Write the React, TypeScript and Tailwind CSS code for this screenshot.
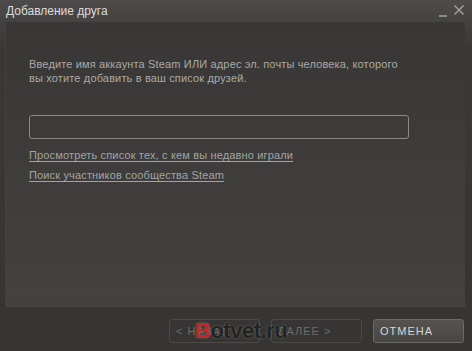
const font = { fontFamily: '"Liberation Sans", "DejaVu Sans", sans-serif' };

function NavButton({ label, primary }: { label: string; primary?: boolean }) {
  return (
    <button
      className={
        primary
          ? "h-[24px] w-[91px] rounded-[3px] border border-[#6b6a67] bg-gradient-to-b from-[#55534f] to-[#484744] pl-[6px] text-left text-[11px] tracking-[1px] text-[#d6d6d6]"
          : "h-[24px] w-[91px] rounded-[3px] border border-[#4b4a47] bg-transparent pl-[6px] text-left text-[11px] tracking-[1px] text-[#6e6d6a]"
      }
    >
      {label}
    </button>
  );
}

export default function App() {
  return (
    <div
      className="relative flex h-[351px] w-[472px] flex-col overflow-hidden bg-gradient-to-b from-[#4d4c4a] via-[#393836] via-[14%] to-[#363533]"
      style={font}
    >
      {/* title bar */}
      <div className="flex h-[22px] items-center justify-between pl-[6px] pr-[8px]">
        <span className="text-[12px] text-[#dcdcdc]">Добавление друга</span>
        <div className="flex items-center gap-[7px]">
          <span className="mt-[9px] h-[2px] w-[8px] bg-[#8a8a8a]" />
          <svg width="10" height="10" viewBox="0 0 10 10" className="mb-[2px]">
            <path d="M0.5 0.5 L9.5 9.5 M9.5 0.5 L0.5 9.5" stroke="#a2a2a2" strokeWidth="1.4" />
          </svg>
        </div>
      </div>

      {/* body panel */}
      <div className="flex flex-1">
        <div className="ml-[5px] mr-[7px] h-[285px] flex-1 bg-gradient-to-b from-[#383735] to-[#434240] px-[24px] pt-[35px] shadow-[inset_1px_0_0_#42413f]">
          <p className="text-[11px] leading-[14px] tracking-[0.15px] text-[#a9a9a9]">
            Введите имя аккаунта Steam ИЛИ адрес эл. почты человека, которого
            <br />
            вы хотите добавить в ваш список друзей.
          </p>
          <div className="mt-[30px] h-[24px] w-[380px] rounded-[3px] border border-[#8a8985]" />
          <div className="mt-[10px] flex flex-col items-start gap-[7px] text-[11px] leading-[13px] tracking-[0.15px] text-[#a3a3a3]">
            <a className="underline underline-offset-2">Просмотреть список тех, с кем вы недавно играли</a>
            <a className="underline underline-offset-2">Поиск участников сообщества Steam</a>
          </div>
        </div>
      </div>

      {/* footer */}
      <div className="flex h-[44px] items-start justify-end gap-[11px] pr-[8px] pt-[12px]">
        <NavButton label="< НАЗАД" />
        <NavButton label="ДАЛЕЕ >" />
        <NavButton label="ОТМЕНА" primary />
      </div>

      {/* watermark */}
      <div
        className="absolute left-[195px] top-[318px] text-[22px] font-bold leading-[26px] tracking-[-0.5px] [text-shadow:0_0_2px_#77766f]"
        style={{ fontFamily: '"Liberation Sans", Arial, sans-serif' }}
      >
        <span className="text-[#c4252b]">B</span>
        <span className="text-[#232321]">otvet.ru</span>
      </div>
    </div>
  );
}
